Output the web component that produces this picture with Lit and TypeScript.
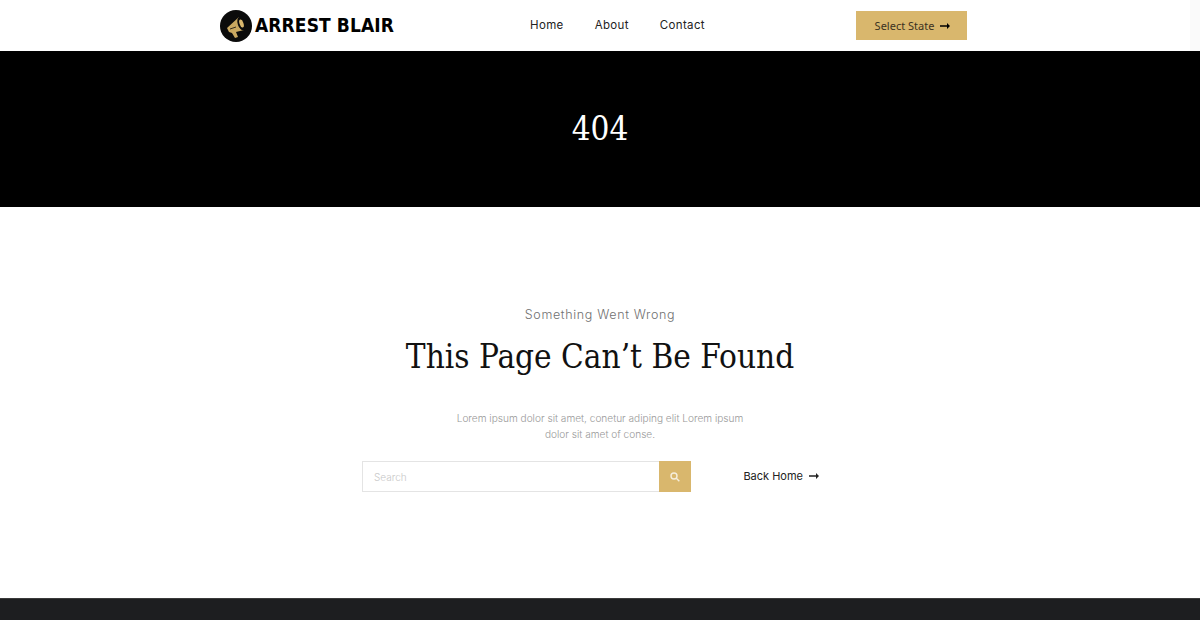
import { LitElement, html, css } from "lit";
import { customElement } from "lit/decorators.js";

const arrow = html`<svg class="arrow" width="10" height="6" viewBox="0 0 10 6"><path d="M0 2.200h7V0l3 3-3 3V3.800H0z" fill="currentColor"/></svg>`;

@customElement("app-root")
export class AppRoot extends LitElement {
  static styles = css`
    :host {
      display: block;
      height: 620px;
      overflow: hidden;
      font-family: Inter, "Noto Sans", sans-serif;
      background: #fff;
      color: #000;
    }
    .header {
      position: relative;
      height: 51px;
      padding-left: 220px;
      display: flex;
    }
    /* faint strip at the right edge of the bar */
    .header::after {
      content: "";
      position: absolute;
      top: 0;
      right: 0;
      bottom: 0;
      width: 10px;
      background: #fafafa;
    }
    .header-inner {
      width: 747px;
      display: grid;
      grid-template-columns: 310px 1fr auto;
      align-items: center;
    }
    .logo {
      display: flex;
      align-items: center;
      gap: 3px;
    }
    .logo-name {
      font-family: "DejaVu Sans Condensed", "DejaVu Sans", sans-serif;
      font-stretch: condensed;
      font-weight: 700;
      font-size: 19px;
      letter-spacing: 0.1px;
      white-space: nowrap;
      padding-bottom: 2px;
    }
    .nav {
      display: flex;
      gap: 31px;
      padding-bottom: 2px;
      font-size: 11.5px;
      font-weight: 400;
      letter-spacing: 0.35px;
      color: #222;
    }
    .state {
      width: 111px;
      height: 29px;
      padding-left: 2px;
      box-sizing: border-box;
      background: #d9b76d;
      display: flex;
      align-items: center;
      justify-content: center;
      gap: 6px;
      font-family: "Noto Sans", sans-serif;
      font-size: 11px;
      color: #3c3222;
    }
    .state .arrow {
      color: #000;
    }
    .hero {
      height: 156px;
      padding-bottom: 2px;
      box-sizing: border-box;
      background: #000;
      color: #fff;
      display: flex;
      align-items: center;
      justify-content: center;
      font-family: "DejaVu Serif Condensed", "DejaVu Serif", serif;
      font-stretch: condensed;
      font-size: 33px;
    }
    .main {
      height: 391px;
      display: flex;
      flex-direction: column;
      align-items: center;
      padding-top: 100px;
      box-sizing: border-box;
    }
    .eyebrow {
      font-size: 12.5px;
      font-weight: 300;
      letter-spacing: 0.65px;
      line-height: 16px;
      color: #707070;
    }
    h1 {
      margin: 12px 0 0;
      font-family: "DejaVu Serif Condensed", "DejaVu Serif", serif;
      font-stretch: condensed;
      font-weight: 400;
      font-size: 33px;
      line-height: 44px;
      color: #111;
    }
    .copy {
      margin: 31px 0 0;
      width: 300px;
      text-align: center;
      font-size: 10.1px;
      font-weight: 300;
      line-height: 16px;
      color: #999;
    }
    .actions {
      margin-top: 19px;
      display: flex;
      align-items: center;
      width: 476px;
      padding-right: 19px;
      box-sizing: border-box;
    }
    .search {
      width: 329px;
      height: 31px;
      box-sizing: border-box;
      border: 1px solid #e4e4e4;
      display: flex;
    }
    .search input {
      flex: 1;
      min-width: 0;
      border: 0;
      outline: 0;
      padding: 0 11px;
      background: transparent;
      font: 300 10px Inter, sans-serif;
    }
    .search input::placeholder {
      color: #c8c8c8;
    }
    .search button {
      width: 32px;
      margin: -1px -1px -1px 0;
      border: 0;
      padding: 0;
      background: #d9b76d;
      display: flex;
      align-items: center;
      justify-content: center;
    }
    .back {
      margin-left: auto;
      display: flex;
      align-items: center;
      gap: 6px;
      padding-bottom: 2px;
      font-size: 11px;
      color: #222;
    }
    .footer {
      height: 22px;
      background: #1d1e20;
      border-top: 1px solid #3a3a3a;
      box-sizing: border-box;
    }
  `;

  render() {
    return html`
      <header class="header">
        <div class="header-inner">
          <div class="logo">
            <svg width="32" height="32" viewBox="0 0 32 32">
              <circle cx="16" cy="16" r="16" fill="#0b0b0b" />
              <path d="M7 18L19 7l5 13-8 2 2 5-3 1-3-5-3-1z" fill="#c9a860" />
              <path d="M10 19l6-2" stroke="#0b0b0b" stroke-width="0.800" />
              <ellipse cx="21.500" cy="13.500" rx="3.800" ry="7" fill="#0b0b0b" transform="rotate(-18 21.500 13.500)" />
              <ellipse cx="21.500" cy="13.500" rx="2" ry="4.200" fill="#d9b76d" transform="rotate(-18 21.500 13.500)" />
            </svg>
            <span class="logo-name">ARREST BLAIR</span>
          </div>
          <nav class="nav"><span>Home</span><span>About</span><span>Contact</span></nav>
          <div class="state">Select State ${arrow}</div>
        </div>
      </header>
      <section class="hero">404</section>
      <main class="main">
        <div class="eyebrow">Something Went Wrong</div>
        <h1>This Page Can’t Be Found</h1>
        <p class="copy">Lorem ipsum dolor sit amet, conetur adiping elit Lorem ipsum dolor sit amet of conse.</p>
        <div class="actions">
          <div class="search">
            <input placeholder="Search" />
            <button aria-label="Search">
              <svg width="10" height="10" viewBox="0 0 10 10" fill="none" stroke="#f6eedc" stroke-width="1.400">
                <circle cx="4" cy="4" r="3" />
                <path d="M6.300 6.300L9.300 9.300" />
              </svg>
            </button>
          </div>
          <div class="back">Back Home ${arrow}</div>
        </div>
      </main>
      <footer class="footer"></footer>
    `;
  }
}
